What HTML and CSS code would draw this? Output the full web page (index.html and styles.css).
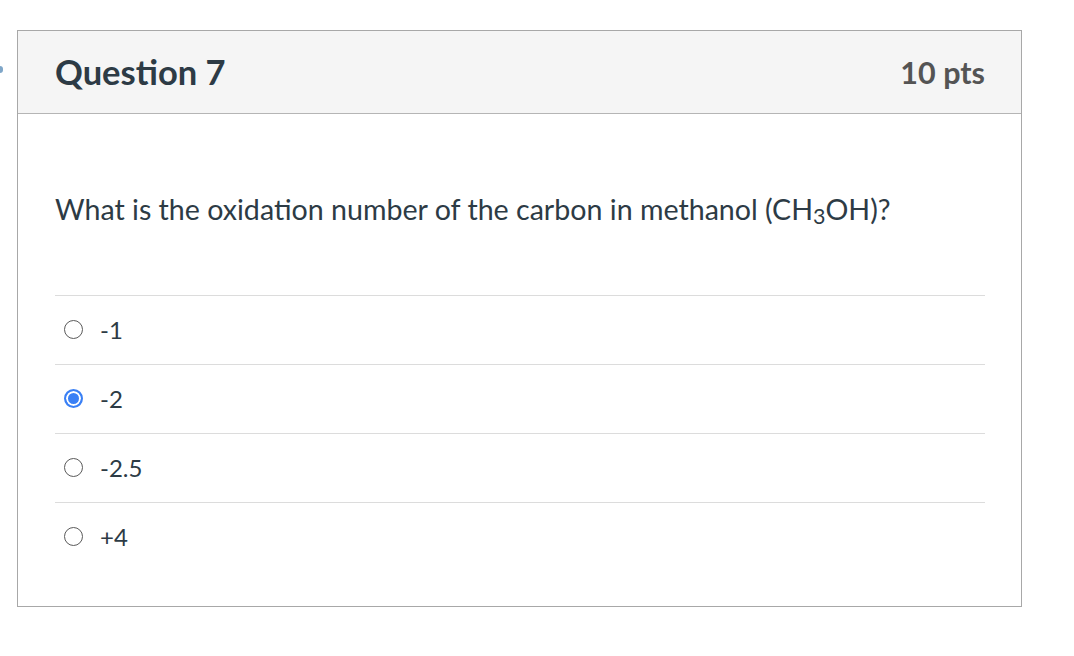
FILE: index.html
```html
<!DOCTYPE html>
<html>
<head>
<meta charset="utf-8">
<link rel="stylesheet" href="styles.css">
</head>
<body>
<div class="page">
  <div class="edge"><span class="edge-dot"></span></div>
  <div class="card">
    <div class="card-header">
      <h2 class="q-title">Question 7</h2>
      <div class="q-pts">10 pts</div>
    </div>
    <div class="card-body">
      <p class="q-text">What is the oxidation number of the carbon in methanol (CH<sub>3</sub>OH)?</p>
      <div class="answers">
        <div class="answer"><span class="radio"></span><span class="a-label">-1</span></div>
        <div class="answer"><span class="radio checked"></span><span class="a-label">-2</span></div>
        <div class="answer"><span class="radio"></span><span class="a-label">-2.5</span></div>
        <div class="answer"><span class="radio"></span><span class="a-label">+4</span></div>
      </div>
    </div>
  </div>
</div>
</body>
</html>
```
FILE: styles.css
```css
* { box-sizing: border-box; }
html, body { margin: 0; padding: 0; background: #fff; }
body { font-family: Lato, "Open Sans", sans-serif; color: #2d3b45; }
.page { display: flex; align-items: flex-start; padding-top: 30px; width: 1074px; height: 656px; }
.edge { width: 17px; flex: none; padding-top: 36px; }
.edge-dot { display: block; width: 3px; height: 7px; background: #7fa6c8; border-radius: 0 3px 3px 0; }
.card { width: 1005px; border: 1px solid #a8a8a8; flex: none; }
.card-header {
  height: 83px; background: #f5f5f5; border-bottom: 1px solid #b5b5b5;
  display: flex; align-items: center; justify-content: space-between;
  padding: 0 36px 0 37px;
}
.q-title { margin: 0; font-size: 34.5px; font-weight: 700; color: #2d3b45; line-height: 40px; }
.q-pts { font-size: 30.5px; font-weight: 700; color: #545454; line-height: 40px; }
.card-body { padding: 0 36px 36px 37px; height: 492px; }
.q-text { margin: 0; padding-top: 76px; height: 181px; font-size: 28.6px; line-height: 38px; color: #2d3b45; }
.q-text sub { font-size: 0.75em; vertical-align: -0.2em; line-height: 0; }
.answers { display: flex; flex-direction: column; }
.answer { height: 69px; border-top: 1px solid #dcdcdc; display: flex; align-items: center; padding-left: 9px; }
.radio {
  width: 19px; height: 19px; border-radius: 50%; border: 1.5px solid #5a5a5a;
  flex: none; margin-right: 17px; position: relative; top: -1px;
}
.radio.checked { border: 2px solid #3a80f5; background: #3a80f5; box-shadow: inset 0 0 0 2px #fff; }
.a-label { font-size: 24px; color: #2d3b45; line-height: 30px; }
```
